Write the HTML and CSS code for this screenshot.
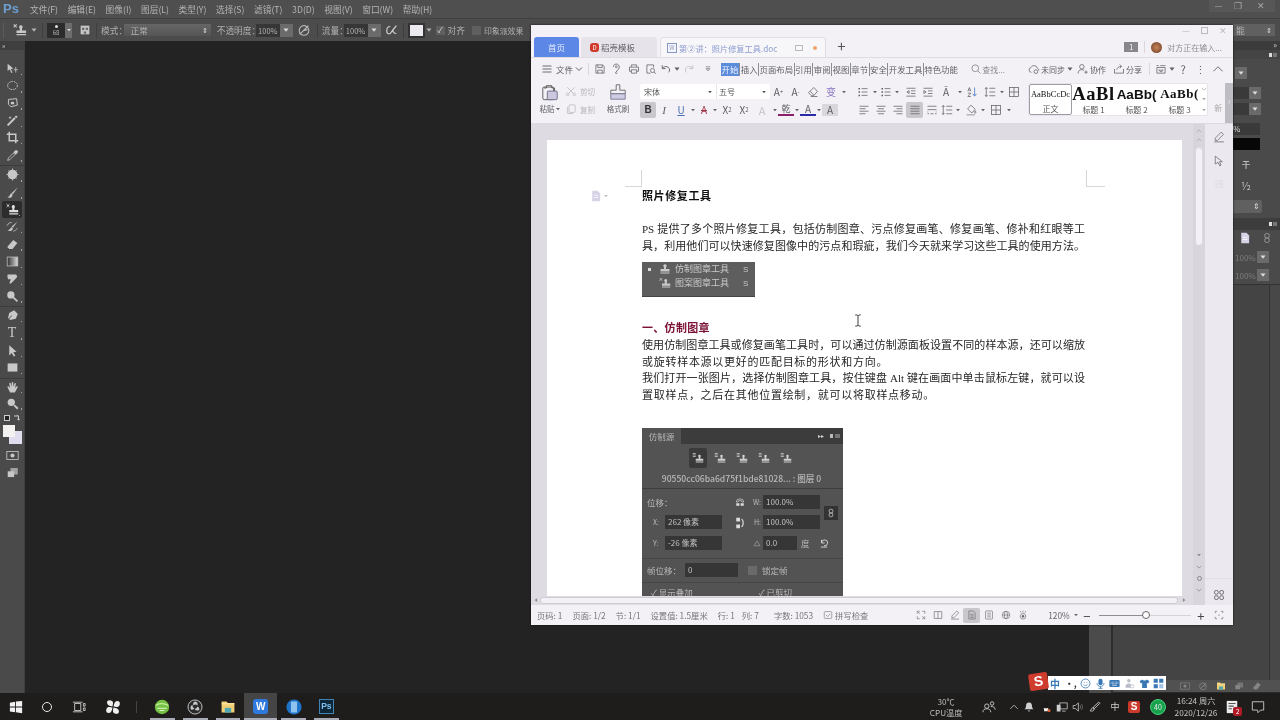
FILE: index.html
```html
<!DOCTYPE html>
<html lang="zh">
<head>
<meta charset="utf-8">
<title>Photoshop + WPS</title>
<link rel="stylesheet" href="styles.css">
</head>
<body>
<svg class="sprite" aria-hidden="true">
<symbol id="stamp" viewBox="0 0 16 16"><path fill="currentColor" d="M8 1.5a2.3 2.3 0 0 1 1.4 4.1V8H14v3.2H2V8h4.6V5.6A2.3 2.3 0 0 1 8 1.5zM2 12.5h12V14H2z"/></symbol>
<symbol id="stampx" viewBox="0 0 16 16"><path fill="currentColor" d="M9 2.500a2.100 2.100 0 0 1 1.300 3.700V8.500H15v3H4v-3h3.700V6.200A2.100 2.100 0 0 1 9 2.500zM4 12.700h11V14H4z"/><path d="M.8 1.500l3.400 3.400M4.200 1.500L.8 4.900" fill="none" stroke="currentColor" stroke-width="1.200"/></symbol>
<symbol id="stampd" viewBox="0 0 16 16"><path fill="currentColor" d="M10 3.500a1.800 1.800 0 0 1 1.100 3.200V9H15v2.500H5V9h3.900V6.700A1.800 1.800 0 0 1 10 3.500zM5 12.500h10V14H5z"/><path d="M1 2h4M1 4h4M1 6h4" fill="none" stroke="currentColor"/></symbol>
<symbol id="move" viewBox="0 0 16 16"><path fill="currentColor" d="M2 2l7 6-3 .5L8 13l-1.500.6L4.600 9 2 11z"/><path d="M12 6v7M9.500 9.500h5" stroke="currentColor" fill="none"/></symbol>
<symbol id="lasso" viewBox="0 0 16 16"><ellipse cx="8" cy="8" rx="6" ry="5" fill="none" stroke="currentColor" stroke-width="1.200" stroke-dasharray="2 1"/></symbol>
<symbol id="polyl" viewBox="0 0 16 16"><path d="M3 3l10-1 1 8-8 2-3-3z" fill="none" stroke="currentColor" stroke-width="1.200"/><path d="M6 6h4v3H6z" fill="currentColor"/></symbol>
<symbol id="wand" viewBox="0 0 16 16"><path d="M2 14L11 5" stroke="currentColor" stroke-width="2.400"/><circle cx="12.500" cy="3.500" r="1.500" fill="currentColor"/><path d="M5 3v3M3.500 4.500h3" stroke="currentColor"/></symbol>
<symbol id="crop" viewBox="0 0 16 16"><path d="M4 1v11h11M1 4h11v11" fill="none" stroke="currentColor" stroke-width="1.800"/></symbol>
<symbol id="drop" viewBox="0 0 16 16"><path d="M2 14l1-3 6-6 2 2-6 6z" fill="none" stroke="currentColor"/><path d="M9 4l2-2c1-1 2-1 3 0s1 2 0 3l-2 2z" fill="currentColor"/></symbol>
<symbol id="heal" viewBox="0 0 16 16"><circle cx="8" cy="8" r="6" fill="currentColor"/><path d="M3 3l2 2M13 3l-2 2M3 13l2-2M13 13l-2-2M8 .5v2M8 13.500v2M.5 8h2M13.500 8h2" stroke="currentColor"/></symbol>
<symbol id="brush" viewBox="0 0 16 16"><path d="M14.500 1.500L7 8.500l1.500 1.500z" fill="currentColor"/><path d="M7 9c-2 .5-2 2.500-3 3.500-.5.500-1.500 1-2.500 1 2 1.500 5 1 6-1 .4-.9.500-2 .5-2.500z" fill="currentColor"/></symbol>
<symbol id="hist" viewBox="0 0 16 16"><path d="M14 2L7 8l1.500 1.500zM7 9c-2 1-2 3-5 4 3 1 6 .5 6.500-3z" fill="currentColor"/><path d="M1 7c2-3 4-4 6-4M9 14c2-1 4-2 5-4" fill="none" stroke="currentColor"/></symbol>
<symbol id="eraser" viewBox="0 0 16 16"><path d="M9 2.500l5 3.500-6 7.500H4L1.500 11z" fill="currentColor"/></symbol>
<symbol id="grad" viewBox="0 0 16 16"><defs><linearGradient id="gr"><stop offset="0" stop-color="#2e2e2e"/><stop offset="1" stop-color="#dcdcdc"/></linearGradient></defs><rect x="1.500" y="2.500" width="13" height="11" fill="url(#gr)" stroke="#bbb"/></symbol>
<symbol id="smudge" viewBox="0 0 16 16"><path d="M2 3h9c3 0 3 3 2 4l-3 3-4 4c-1 .5-2 0-1.500-1.500L6 9H3c-1 0-1.500-5-1-6z" fill="currentColor"/></symbol>
<symbol id="dodge" viewBox="0 0 16 16"><circle cx="6" cy="6" r="4.500" fill="currentColor"/><path d="M9 9l5 5" stroke="currentColor" stroke-width="2.200"/></symbol>
<symbol id="pen" viewBox="0 0 16 16"><path d="M10 1.500l4.500 4.500-2.500 6-7 1.500L2.500 11 4 5z" fill="currentColor"/><path d="M3 13l4-5" stroke="#4a4a4a"/></symbol>
<symbol id="path" viewBox="0 0 16 16"><path d="M4 1.500l9 8-4 .5 2.500 4.500-2 1L7 11l-3 3z" fill="currentColor"/></symbol>
<symbol id="rect" viewBox="0 0 16 16"><rect x="2" y="3" width="12" height="10" fill="currentColor"/></symbol>
<symbol id="hand" viewBox="0 0 16 16"><path d="M5 14L2 8c-.5-1.500 1-2 1.800-.8L5 8.500 4 3c0-1.200 1.600-1.200 1.900 0L7 7V2c0-1.200 1.800-1.200 1.900 0L9.300 7 10.500 3c.4-1 1.900-.8 1.700.5L11 8.500l1.800-1.700c1-.8 2.200.2 1.400 1.300L11 14z" fill="currentColor"/></symbol>
<symbol id="zoomi" viewBox="0 0 16 16"><circle cx="6.500" cy="6.500" r="4.500" fill="currentColor"/><path d="M10 10l4.500 4.500" stroke="currentColor" stroke-width="2.400"/></symbol>
<symbol id="mask" viewBox="0 0 16 16"><rect x="1" y="3" width="14" height="10" fill="none" stroke="currentColor"/><circle cx="8" cy="8" r="2.500" fill="currentColor"/></symbol>
<symbol id="screen" viewBox="0 0 16 16"><rect x="1.500" y="6" width="9" height="8" fill="currentColor" stroke="#4a4a4a"/><rect x="5.500" y="2.500" width="9" height="8" fill="currentColor" opacity=".7"/></symbol>
<symbol id="pie" viewBox="0 0 16 16"><circle cx="8" cy="8.500" r="5.500" fill="none" stroke="currentColor" stroke-width="1.200"/><path d="M3 13L13 3M8 8.500l4-1" stroke="currentColor" stroke-width="1.400"/></symbol>
<symbol id="flow" viewBox="0 0 16 16"><path d="M6 4C3 4 2 7 2 9.500S4 13 6 12l3-4 4-5M9 8c0 2 1 4 4 4" fill="none" stroke="currentColor" stroke-width="1.400"/></symbol>
<symbol id="dd" viewBox="0 0 8 8"><path d="M1.500 2.500h5L4 5.800z" fill="currentColor"/></symbol>
<symbol id="rt" viewBox="0 0 8 8"><path d="M2.500 1.500v5L5.800 4z" fill="currentColor"/></symbol>
<symbol id="lt" viewBox="0 0 8 8"><path d="M5.500 1.500v5L2.200 4z" fill="currentColor"/></symbol>
<symbol id="chev" viewBox="0 0 8 8"><path d="M1 2.500L4 5.500 7 2.500" fill="none" stroke="currentColor"/></symbol>
<symbol id="up" viewBox="0 0 16 16"><path d="M2 11l6-6 6 6" fill="none" stroke="currentColor" stroke-width="1.200"/></symbol>
<symbol id="swap" viewBox="0 0 8 8"><path d="M1 2h4.500v4M4 .8L5.500 2.300M4.300 4.800L5.500 6.200 6.800 4.800" fill="none" stroke="currentColor"/></symbol>
<symbol id="ham" viewBox="0 0 16 16"><path d="M2 4h12M2 8h12M2 12h12" stroke="currentColor" stroke-width="1.200"/></symbol>
<symbol id="save" viewBox="0 0 16 16"><path d="M2.500 2.500h9l2 2v9h-11zM5 2.500V6h6V2.500M5 13.500V9.500h6v4" fill="none" stroke="currentColor"/></symbol>
<symbol id="wsave" viewBox="0 0 16 16"><path d="M3 5a4 4 0 1 1 7 3L6 13M8 13a1 1 0 1 1-2 0" fill="none" stroke="currentColor" stroke-width="1.100"/><circle cx="7" cy="5" r="1.200" fill="none" stroke="currentColor"/></symbol>
<symbol id="print" viewBox="0 0 16 16"><path d="M4.500 5V2.500h7V5M4.500 11H2V5.500h12V11h-2.500M4.500 9h7v4.500h-7z" fill="none" stroke="currentColor"/></symbol>
<symbol id="prev" viewBox="0 0 16 16"><path d="M11.500 6V2.500h-9v11h5" fill="none" stroke="currentColor"/><circle cx="10" cy="10" r="2.700" fill="none" stroke="currentColor"/><path d="M12 12l2.500 2.500" stroke="currentColor"/></symbol>
<symbol id="undo" viewBox="0 0 16 16"><path d="M3 3v4.500h4.500M3.200 7.200C5 4.500 9 3.800 11.300 6c2 2 1.800 4.800.2 6.500" fill="none" stroke="currentColor" stroke-width="1.200"/></symbol>
<symbol id="redo" viewBox="0 0 16 16"><path d="M13 3v4.500H8.500M12.800 7.200C11 4.500 7 3.800 4.700 6c-2 2-1.800 4.800-.2 6.500" fill="none" stroke="currentColor" stroke-width="1.200"/></symbol>
<symbol id="more" viewBox="0 0 16 16"><path d="M4.500 4.500h7M5 7.500h6L8 11z" fill="none" stroke="currentColor"/></symbol>
<symbol id="search" viewBox="0 0 16 16"><circle cx="7" cy="7" r="4.500" fill="none" stroke="currentColor" stroke-width="1.200"/><path d="M10.300 10.300l3.700 3.700" stroke="currentColor" stroke-width="1.200"/></symbol>
<symbol id="cloud" viewBox="0 0 16 16"><path d="M4.500 12.500a3.300 3.300 0 0 1-.5-6.500 4.500 4.500 0 0 1 8.500 1 2.800 2.800 0 0 1 2 3" fill="none" stroke="currentColor"/><circle cx="10.500" cy="11.500" r="2.500" fill="none" stroke="currentColor"/></symbol>
<symbol id="collab" viewBox="0 0 16 16"><circle cx="6.500" cy="5" r="3" fill="none" stroke="currentColor"/><path d="M1.500 14c0-3.500 2-5 5-5 1.500 0 2.500.4 3 1M12 10v4.500M9.800 12.200h4.500" fill="none" stroke="currentColor"/></symbol>
<symbol id="share" viewBox="0 0 16 16"><path d="M2 8v5.500h12V8M5 9c.5-3 3-4.500 6-4.500M9 2l2.500 2.500L9 7" fill="none" stroke="currentColor"/></symbol>
<symbol id="box" viewBox="0 0 16 16"><path d="M2 3.500h3M7 3.500h7M2.500 6h11v7.500h-11zM5 9.500h6L8 12z" fill="none" stroke="currentColor"/></symbol>
<symbol id="paste" viewBox="0 0 20 20"><path d="M3 5.500h3V3h6v2.500h3v4" fill="none" stroke="#555"/><rect x="2" y="4.500" width="12" height="14" rx="1.500" fill="none" stroke="#555"/><rect x="7" y="9" width="11" height="9.500" rx="1" fill="#cbc8e0" stroke="#6a6a80"/></symbol>
<symbol id="cut" viewBox="0 0 16 16"><path d="M3 3l8 8M13 3L5 11" stroke="currentColor"/><circle cx="3.500" cy="12.500" r="1.800" fill="none" stroke="currentColor"/><circle cx="12.500" cy="12.500" r="1.800" fill="none" stroke="currentColor"/></symbol>
<symbol id="copy" viewBox="0 0 16 16"><rect x="5.500" y="2.500" width="8" height="10" rx="1" fill="none" stroke="currentColor"/><path d="M3.500 5v9h7" fill="none" stroke="currentColor"/></symbol>
<symbol id="fbrush" viewBox="0 0 20 20"><path d="M8 2h4v6h6v4H2V8h6z" fill="none" stroke="#666"/><path d="M2 12h16v6H2z" fill="#cfcce6" stroke="#77768c"/></symbol>
<symbol id="clear" viewBox="0 0 16 16"><path d="M9 2l5 5-5 6H6L2 9z" fill="none" stroke="currentColor"/><path d="M4 7l5 5M5 14h9" stroke="currentColor"/></symbol>
<symbol id="list" viewBox="0 0 16 16"><path d="M6 3.500h8M6 8h8M6 12.500h8" stroke="currentColor"/><path d="M2 2.500h2v2H2zM2 7h2v2H2zM2 11.500h2v2H2z" fill="currentColor"/></symbol>
<symbol id="indl" viewBox="0 0 16 16"><path d="M2 3h12M8 6.500h6M8 10h6M2 13.500h12M5.500 6L2.500 8l3 2z" fill="none" stroke="currentColor"/></symbol>
<symbol id="indr" viewBox="0 0 16 16"><path d="M2 3h12M8 6.500h6M8 10h6M2 13.500h12M2.500 6l3 2-3 2z" fill="none" stroke="currentColor"/></symbol>
<symbol id="sort" viewBox="0 0 16 16"><path d="M11.500 2v11M9 10.500l2.500 3 2.500-3" fill="none" stroke="#3a6fc2"/><path d="M2.500 7l2-5 2 5M3.500 5.500h2M2.500 9.500h4l-4 4.500h4" fill="none" stroke="currentColor"/></symbol>
<symbol id="spacing" viewBox="0 0 16 16"><path d="M7 3h8M7 8h8M7 13h8M3 2v12M1.200 4L3 2l1.800 2M1.200 12L3 14l1.800-2" fill="none" stroke="currentColor"/></symbol>
<symbol id="table" viewBox="0 0 16 16"><rect x="2" y="2" width="12" height="12" fill="none" stroke="currentColor"/><path d="M2 8h12M8 2v12" stroke="currentColor"/></symbol>
<symbol id="aleft" viewBox="0 0 16 16"><path d="M2 3h12M2 6.300h8M2 9.600h12M2 13h8" stroke="currentColor"/></symbol>
<symbol id="acen" viewBox="0 0 16 16"><path d="M2 3h12M4 6.300h8M2 9.600h12M4 13h8" stroke="currentColor"/></symbol>
<symbol id="aright" viewBox="0 0 16 16"><path d="M2 3h12M6 6.300h8M2 9.600h12M6 13h8" stroke="currentColor"/></symbol>
<symbol id="ajust" viewBox="0 0 16 16"><path d="M2 3h12M2 6.300h12M2 9.600h12M2 13h12" stroke="currentColor"/></symbol>
<symbol id="adist" viewBox="0 0 16 16"><path d="M2 3h12M2 7.500h12M2 13h2M6 13h4M12 13h2" stroke="currentColor"/><path d="M2 10.500h1M13 10.500h1" stroke="currentColor"/></symbol>
<symbol id="shade" viewBox="0 0 16 16"><path d="M8 1.500l5.500 5.500-4.500 5-5.500-5.500zM13.500 9c1 1.500 1.500 2.500 0 3.500-1-1-1-2 0-3.500z" fill="none" stroke="currentColor"/><path d="M2 14.500h11" stroke="#777"/></symbol>
<symbol id="side-pen" viewBox="0 0 16 16"><path d="M11 1.500l3 3-8 8H3v-3zM1.500 14.500h13" fill="none" stroke="currentColor"/></symbol>
<symbol id="cursor" viewBox="0 0 16 16"><path d="M3 1.500l9.500 7.500H8.500l2.200 4.500-1.800 1-2.200-4.700L3 12z" fill="none" stroke="currentColor"/></symbol>
<symbol id="faded" viewBox="0 0 16 16"><path d="M2 4h12M2 8h12M2 12h12M9 3l4 10" stroke="currentColor"/></symbol>
<symbol id="grid4" viewBox="0 0 16 16"><rect x="2" y="2" width="5" height="5" rx="2" fill="none" stroke="currentColor" stroke-width="1.200"/><rect x="9" y="2" width="5" height="5" rx="2" fill="none" stroke="currentColor" stroke-width="1.200"/><rect x="2" y="9" width="5" height="5" rx="2" fill="none" stroke="currentColor" stroke-width="1.200"/><rect x="9" y="9" width="5" height="5" rx="2" fill="none" stroke="currentColor" stroke-width="1.200"/></symbol>
<symbol id="sample" viewBox="0 0 16 16"><rect x="1.500" y="1.500" width="13" height="13" fill="#c4c4c4" stroke="#3c3c3c"/><path d="M4 5h3v3H4zM9 5h3v3H9zM6.500 10h3v3h-3z" fill="#6a6a6a"/></symbol>
<symbol id="docic" viewBox="0 0 16 16"><path d="M3 1h7l3.500 3.500V15H3z" fill="#d6d3e6"/><path d="M5 7h6M5 10h6" stroke="#fff"/></symbol>
<symbol id="check" viewBox="0 0 16 16"><rect x="2" y="2.500" width="12" height="11" rx="1.500" fill="none" stroke="currentColor"/><path d="M5 8l2.500 2.500L11.500 6" fill="none" stroke="currentColor"/></symbol>
<symbol id="expand" viewBox="0 0 16 16"><path d="M2 6V2h4M10 2h4v4M14 10v4h-4M6 14H2v-4M3 3l3 3M13 13l-3-3" fill="none" stroke="currentColor"/></symbol>
<symbol id="book" viewBox="0 0 16 16"><path d="M2 2.500h12v11H2zM8 2.500v11" fill="none" stroke="currentColor"/></symbol>
<symbol id="pagev" viewBox="0 0 16 16"><path d="M3 1.500h7l3 3v10H3zM5.500 7h5M5.500 9.500h5M5.500 12h5" fill="none" stroke="currentColor"/></symbol>
<symbol id="outl" viewBox="0 0 16 16"><rect x="2.500" y="1.500" width="11" height="13" rx="1" fill="none" stroke="currentColor"/><path d="M5 5h6M5 8h6M5 11h6" stroke="currentColor"/></symbol>
<symbol id="globe" viewBox="0 0 16 16"><circle cx="8" cy="8" r="6" fill="none" stroke="currentColor"/><ellipse cx="8" cy="8" rx="2.500" ry="6" fill="none" stroke="currentColor"/><path d="M2 8h12" stroke="currentColor"/></symbol>
<symbol id="eye" viewBox="0 0 16 16"><circle cx="8" cy="10" r="4.500" fill="none" stroke="currentColor"/><circle cx="8" cy="10" r="2" fill="currentColor"/><path d="M5 4L3.500 1.500M8 4V1M11 4l1.500-2.500" stroke="currentColor"/></symbol>
<symbol id="focus" viewBox="0 0 16 16"><path d="M2 5V2h3M11 2h3v3M14 11v3h-3M5 14H2v-3" fill="none" stroke="currentColor"/><circle cx="8" cy="8" r="1" fill="currentColor"/></symbol>
<symbol id="anchor" viewBox="0 0 16 16"><path d="M2 8a6 5 0 0 1 12 0h-3a3 2.500 0 0 0-6 0z" fill="none" stroke="currentColor"/><path d="M2 10h5v4H2zM9 10h5v4H9z" fill="currentColor"/></symbol>
<symbol id="flip" viewBox="0 0 16 16"><path d="M3 1h5v5H3zM3 10h5v5H3z" fill="currentColor"/><path d="M10 3c3 1 3 9 0 10" fill="none" stroke="currentColor" stroke-width="1.500"/></symbol>
<symbol id="angle" viewBox="0 0 16 16"><path d="M2 13.500h12L8 4z" fill="none" stroke="currentColor"/></symbol>
<symbol id="reset" viewBox="0 0 16 16"><path d="M4 3v5h5M4.200 7.500A4.800 4.800 0 1 1 8 12.500M3 14.500h10" fill="none" stroke="currentColor" stroke-width="1.400"/></symbol>
<symbol id="link" viewBox="0 0 16 16"><rect x="5" y="2" width="6" height="6" rx="2.500" fill="none" stroke="currentColor" stroke-width="1.300"/><rect x="5" y="8" width="6" height="6" rx="2.500" fill="none" stroke="currentColor" stroke-width="1.300"/></symbol>
<symbol id="win" viewBox="0 0 16 16"><path fill="currentColor" d="M1 3l6-1v5.500H1zM8 1.800L15 1v6.500H8zM1 8.500h6V14l-6-1zM8 8.500h7V15l-7-1z"/></symbol>
<symbol id="tview" viewBox="0 0 16 16"><path d="M3 4h7v8H3zM1 2.500h11M1 13.500h11M13 4h2v3h-2zM13 9h2v3h-2z" fill="none" stroke="currentColor"/></symbol>
<symbol id="pinw" viewBox="0 0 16 16"><path fill="currentColor" d="M7.500 7.500C4 7 2 6 2 3.500S5 .5 7 2s.5 4 .5 5.500zM8.500 7.500C9 4 10 2 12.500 2s3 3 1.500 5-4 .5-5.500.5zM8.500 8.500C12 9 14 10 14 12.500S11 15.500 9 14s-.5-4-.5-5.500zM7.500 8.500C7 12 6 14 3.500 14S.5 11 2 9s4-.5 5.500-.5z"/></symbol>
<symbol id="ball" viewBox="0 0 20 20"><circle cx="10" cy="10" r="9" fill="#74c043"/><path d="M2 8c4-3 11-3 16 0" stroke="#c7ec9d" stroke-width="1.500" fill="none"/><path d="M4 11.500h12M7 14.500h6" stroke="#e4f6cf" stroke-width="1.300"/></symbol>
<symbol id="obs" viewBox="0 0 20 20"><circle cx="10" cy="10" r="8.800" fill="#2a2a2a" stroke="#c6c6c6" stroke-width="1.200"/><path d="M10 3a3.500 3.500 0 0 1 3 5 4 4 0 0 0-5 0A3.500 3.500 0 0 1 10 3zM5 13a3.500 3.500 0 0 1 2-5.500 4 4 0 0 0 2.200 4.500A3.500 3.500 0 0 1 5 13zM15.500 13a3.500 3.500 0 0 1-6-.5 4 4 0 0 0 3.500-3 3.500 3.500 0 0 1 2.500 3.500z" fill="#c6c6c6"/></symbol>
<symbol id="folder" viewBox="0 0 20 20"><path d="M2 3h6l2 2h8v12H2z" fill="#f2cf73"/><path d="M2 6h16" stroke="#fff2c8"/><rect x="6" y="11" width="8" height="6" fill="#4ea8b5"/></symbol>
<symbol id="phone" viewBox="0 0 20 20"><circle cx="10" cy="10" r="9.500" fill="#1f74c9"/><rect x="6.200" y="3" width="7.600" height="14" rx="1.200" fill="#8fc4ee"/></symbol>
<symbol id="people" viewBox="0 0 16 16"><circle cx="5.500" cy="7" r="2.500" fill="none" stroke="currentColor"/><path d="M1 14c0-3 2-4 4.500-4S10 11 10 14" fill="none" stroke="currentColor"/><circle cx="11.500" cy="4" r="2" fill="none" stroke="currentColor"/><path d="M10 7.500c3 -.5 5 1 5 3.500" fill="none" stroke="currentColor"/></symbol>
<symbol id="bell" viewBox="0 0 16 16"><path d="M8 2c3 0 4 2 4 5 0 2 1 3 2 4H2c1-1 2-2 2-4 0-3 1-5 4-5zM6.500 12.500h3a1.500 1.500 0 0 1-3 0z" fill="currentColor"/></symbol>
<symbol id="qq" viewBox="0 0 16 16"><path d="M8 1c3 0 4 2.500 4 5 0 1 2 3 1.500 5-1 0-1.500-.5-1.500-.5S12 14 8 14s-4-3.500-4-3.500-.5.5-1.500.5C2 9 4 7 4 6c0-2.500 1-5 4-5z" fill="#1a1a1a"/><path d="M5 9c2 1 4 1 6 0l-.5 4.500H5.500z" fill="#f3efe7"/><circle cx="12" cy="12.500" r="2" fill="#e2623a"/></symbol>
<symbol id="net" viewBox="0 0 16 16"><path d="M5 2.500h10v8H5z" fill="none" stroke="currentColor"/><path d="M1 5h5v9H1z" fill="currentColor"/><path d="M8 13.500h5" stroke="currentColor"/></symbol>
<symbol id="vol" viewBox="0 0 16 16"><path d="M1.500 6h3l4-3.500v11l-4-3.500h-3z" fill="none" stroke="currentColor"/><path d="M10.500 5.500c1.300 1.500 1.300 3.500 0 5M12.500 4c2 2.500 2 5.500 0 8" fill="none" stroke="#777"/></symbol>
<symbol id="penc" viewBox="0 0 16 16"><path d="M13 1.500l1.500 1.500-7 7-2-1.500zM5 9c-2 .5-1.500 2.500-3.500 4 2 1 5 .5 5.500-2.500z" fill="none" stroke="currentColor" stroke-width="1.200"/></symbol>
<symbol id="notes" viewBox="0 0 16 16"><path d="M2 1h12v14H2z" fill="#ececec"/><path d="M4 4h8M4 7h6M4 10h4" stroke="#555" stroke-width="1.300"/></symbol>
<symbol id="action" viewBox="0 0 16 16"><path d="M1.500 2h13v9.500H11l-3 3-.5-3h-6z" fill="none" stroke="currentColor"/></symbol>
<symbol id="smile" viewBox="0 0 16 16"><circle cx="8" cy="8" r="6.500" fill="none" stroke="currentColor" stroke-width="1.200"/><path d="M5 9.500c1.500 2 4.500 2 6 0" fill="none" stroke="currentColor"/><path d="M5.500 5.500h1v1.500h-1zM9.500 5.500h1v1.500h-1z" fill="currentColor"/></symbol>
<symbol id="mic" viewBox="0 0 16 16"><rect x="5" y="1" width="6" height="9.500" rx="3" fill="currentColor"/><path d="M3 7.500c0 6.500 10 6.500 10 0M8 12.500v2.500M5 15h6" fill="none" stroke="currentColor" stroke-width="1.200"/></symbol>
<symbol id="keyb" viewBox="0 0 16 16"><rect x=".5" y="3" width="15" height="10" rx="1.500" fill="currentColor"/><path d="M2.500 6h11M2.500 8h11" stroke="#fff" stroke-dasharray="1 1"/><path d="M4.500 10.500h7" stroke="#fff"/></symbol>
<symbol id="pers" viewBox="0 0 16 16"><circle cx="7" cy="4" r="2.500" fill="#b9bcc6"/><path d="M2 14c0-4 2-6 5-6s5 2 5 6z" fill="#b9bcc6"/><circle cx="12" cy="12" r="2.500" fill="#fff" stroke="#b9bcc6"/></symbol>
<symbol id="shirt" viewBox="0 0 16 16"><path d="M5 2L1 4.500 2.500 8 4.500 7v7.500h7V7l2 1L15 4.500 11 2c-1 2-5 2-6 0z" fill="currentColor"/></symbol>
<symbol id="tiles" viewBox="0 0 16 16"><path d="M1 1h6v6H1zM9 1h6v6H9zM1 9h6v6H1z" fill="currentColor"/><path d="M9 9h6v6H9z" fill="#9fc3e8"/></symbol>
</svg>

<div class="screen">
  <div class="ps">
    <header class="ps-menu">
      <b class="ps-logo">Ps</b>
      <nav class="ps-items">
        <span>文件(F)</span><span>编辑(E)</span><span>图像(I)</span><span>图层(L)</span><span>类型(Y)</span><span>选择(S)</span><span>滤镜(T)</span><span>3D(D)</span><span>视图(V)</span><span>窗口(W)</span><span>帮助(H)</span>
      </nav>
      <div class="ps-win">
        <span class="win-b">—</span><span class="win-b">❐</span><span class="win-b wide">✕</span>
      </div>
    </header>
    <div class="ps-opts">
      <i class="grip"></i>
      <svg class="i14 o-stamp"><use href="#stampx"/></svg>
      <svg class="i8"><use href="#dd"/></svg>
      <i class="opt-div"></i>
      <div class="brush-prev"><i></i><span>68</span></div>
      <span class="brush-dd"><svg class="i8"><use href="#dd"/></svg></span>
      <svg class="i12 o-m1"><use href="#sample"/></svg>
      <i class="opt-div"></i>
      <span class="o-lab">模式：</span>
      <div class="o-select"><span>正常</span><em>⇕</em></div>
      <span class="o-lab o-m2">不透明度：</span>
      <div class="o-num">100%</div><span class="o-btn"><svg class="i8"><use href="#dd"/></svg></span>
      <svg class="i14 o-m3"><use href="#pie"/></svg>
      <i class="opt-div"></i>
      <span class="o-lab">流量：</span>
      <div class="o-num">100%</div><span class="o-btn"><svg class="i8"><use href="#dd"/></svg></span>
      <svg class="i14 o-m4"><use href="#flow"/></svg>
      <i class="opt-div"></i>
      <div class="o-swatch"></div>
      <svg class="i8"><use href="#dd"/></svg>
      <span class="o-check on">✓</span><span class="o-lab">对齐</span>
      <span class="o-check o-m5"></span><span class="o-lab o-imp">印象派效果</span>
      <div class="o-combo"><span>能</span><em>⇕</em></div>
    </div>
    <div class="ps-work">
      <aside class="tools">
        <div class="tools-top">»</div>
        <div class="tgroup">
          <div class="tool"><svg><use href="#move"/></svg></div>
          <div class="tool"><svg><use href="#lasso"/></svg></div>
          <div class="tool"><svg><use href="#polyl"/></svg></div>
          <div class="tool"><svg><use href="#wand"/></svg></div>
          <div class="tool"><svg><use href="#crop"/></svg></div>
          <div class="tool"><svg><use href="#drop"/></svg></div>
        </div>
        <div class="tgroup">
          <div class="tool"><svg><use href="#heal"/></svg></div>
          <div class="tool"><svg><use href="#brush"/></svg></div>
          <div class="tool sel"><svg><use href="#stampx"/></svg></div>
          <div class="tool"><svg><use href="#hist"/></svg></div>
          <div class="tool"><svg><use href="#eraser"/></svg></div>
          <div class="tool"><svg><use href="#grad"/></svg></div>
          <div class="tool"><svg><use href="#smudge"/></svg></div>
          <div class="tool"><svg><use href="#dodge"/></svg></div>
        </div>
        <div class="tgroup">
          <div class="tool"><svg><use href="#pen"/></svg></div>
          <div class="tool tool-t">T</div>
          <div class="tool"><svg><use href="#path"/></svg></div>
          <div class="tool"><svg><use href="#rect"/></svg></div>
        </div>
        <div class="tgroup last">
          <div class="tool"><svg><use href="#hand"/></svg></div>
          <div class="tool"><svg><use href="#zoomi"/></svg></div>
        </div>
        <div class="swatches">
          <div class="sw-mini"><i class="mini-d"></i><svg class="i8"><use href="#swap"/></svg></div>
          <i class="sw-bg"></i><i class="sw-fg"></i>
        </div>
        <div class="tool plain"><svg><use href="#mask"/></svg></div>
        <div class="tool plain"><svg><use href="#screen"/></svg></div>
      </aside>
      <main class="ps-canvas"></main>
      <div class="ps-strip"></div>
      <aside class="dock">
        <div class="d-tabs">»</div>
        <div class="d-head"><i class="d-menu"></i></div>
        <div class="d-rows">
          <div class="d-row r1"><span class="d-btn"><svg class="i8"><use href="#dd"/></svg></span></div>
          <div class="d-row r2"><i class="d-in"></i><span class="d-btn"><svg class="i8"><use href="#dd"/></svg></span></div>
          <div class="d-row r3"><i class="d-in"></i><span class="d-btn"><svg class="i8"><use href="#dd"/></svg></span></div>
          <div class="d-row r4"><i class="d-in wide"><span>%</span></i></div>
          <div class="d-row r5"><i class="d-in black"></i></div>
          <div class="d-txt r6">T̶</div>
          <div class="d-txt r7">½</div>
          <div class="d-row r8"><i class="d-sel">⇕</i></div>
          <div class="d-head2"><i class="d-menu"></i></div>
          <div class="d-row r9"><svg class="i12 d-doc"><use href="#docic"/></svg><svg class="i12 d-chain"><use href="#link"/></svg></div>
          <div class="d-row r10"><span class="d-pct">100%</span><span class="d-btn"><svg class="i8"><use href="#dd"/></svg></span></div>
          <div class="d-row r11"><span class="d-pct">100%</span><span class="d-btn"><svg class="i8"><use href="#dd"/></svg></span></div>
        </div>
        <div class="d-lower"></div>
        <div class="d-foot">
          <svg class="i10"><use href="#mask"/></svg><svg class="i10"><use href="#pie"/></svg><svg class="i10"><use href="#folder"/></svg><svg class="i10"><use href="#screen"/></svg><svg class="i10"><use href="#eraser"/></svg>
        </div>
      </aside>
    </div>
  </div>

  <footer class="taskbar">
    <div class="tb-s s1"><svg class="i14"><use href="#win"/></svg></div>
    <div class="tb-s s2"><i class="cortana"></i></div>
    <div class="tb-s s3"><svg class="i14"><use href="#tview"/></svg></div>
    <div class="tb-s s4"><svg class="i16"><use href="#pinw"/></svg></div>
    <i class="tb-div"></i>
    <div class="tb-app"><svg class="i16"><use href="#ball"/></svg></div>
    <div class="tb-app"><svg class="i16"><use href="#obs"/></svg></div>
    <div class="tb-app"><svg class="i16"><use href="#folder"/></svg></div>
    <div class="tb-app act"><span class="wps-ic">W</span></div>
    <div class="tb-app"><svg class="i16"><use href="#phone"/></svg></div>
    <div class="tb-app"><span class="ps-ic">Ps</span></div>
    <div class="tray">
      <div class="cpu"><span>30℃</span><span>CPU温度</span></div>
      <svg class="i14 t-people"><use href="#people"/></svg>
      <svg class="i10 t-caret"><use href="#up"/></svg>
      <svg class="i12 t-i"><use href="#bell"/></svg>
      <svg class="i12 t-i"><use href="#qq"/></svg>
      <svg class="i12 t-i"><use href="#net"/></svg>
      <svg class="i12 t-i"><use href="#vol"/></svg>
      <svg class="i12 t-i"><use href="#penc"/></svg>
      <span class="t-zh">中</span>
      <span class="t-s">S</span>
      <span class="t-green">40</span>
      <div class="clock"><span>16:24 周六</span><span>2020/12/26</span></div>
      <div class="t-notes"><svg class="i14"><use href="#notes"/></svg><b>2</b></div>
      <svg class="i14 t-act"><use href="#action"/></svg>
    </div>
  </footer>

  <section class="wps">
    <div class="w-title">
      <div class="tab home">首页</div>
      <div class="tab tmpl"><i class="t-dot">D</i>稻壳模板</div>
      <div class="tab doc"><i class="t-w">W</i><span class="t-name">第②讲：照片修复工具.doc</span><i class="t-mon"></i><i class="t-or"></i></div>
      <div class="tab-add">+</div>
      <div class="w-title-r">
        <div class="w-ctrls"><span>—</span><span class="sq"></span><span>✕</span></div>
        <div class="w-collab"><b>1</b><i class="vr"></i><i class="avatar"></i><span>对方正在输入...</span></div>
      </div>
    </div>

    <div class="w-menu">
      <svg class="i12 m-ham"><use href="#ham"/></svg>
      <span class="m-file">文件</span>
      <svg class="i8"><use href="#chev"/></svg>
      <i class="vr m-vr"></i>
      <span class="sl w17"><svg class="i12"><use href="#save"/></svg></span>
      <span class="sl w17"><svg class="i12"><use href="#wsave"/></svg></span>
      <span class="sl w17"><svg class="i12"><use href="#print"/></svg></span>
      <span class="sl w17"><svg class="i12"><use href="#prev"/></svg></span>
      <span class="sl w14"><svg class="i12"><use href="#undo"/></svg></span>
      <span class="sl w8"><svg class="i8"><use href="#dd"/></svg></span>
      <span class="sl w16 dim"><svg class="i12"><use href="#redo"/></svg></span>
      <span class="sl w22"><svg class="i10"><use href="#more"/></svg></span>
      <nav class="m-tabs"><span class="on">开始</span><span>插入</span><span>页面布局</span><span>引用</span><span>审阅</span><span>视图</span><span>章节</span><span>安全</span><span>开发工具</span><span>特色功能</span></nav>
      <span class="m-find"><svg class="i12"><use href="#search"/></svg>查找...</span>
      <div class="m-right">
        <span class="mr m-sync"><svg class="i12"><use href="#cloud"/></svg>未同步<svg class="i8"><use href="#dd"/></svg></span>
        <span class="mr"><svg class="i12"><use href="#collab"/></svg>协作</span>
        <span class="mr"><svg class="i12"><use href="#share"/></svg>分享</span>
        <i class="vr"></i>
        <span class="mr m-box"><svg class="i12"><use href="#box"/></svg><svg class="i8"><use href="#dd"/></svg></span>
        <span class="mr q">?</span>
        <span class="mr q">⋮</span>
        <svg class="i12"><use href="#up"/></svg>
      </div>
    </div>

    <div class="w-ribbon">
      <div class="rg clip">
        <div class="clip-big"><svg class="i18"><use href="#paste"/></svg><span>粘贴<svg class="i6"><use href="#dd"/></svg></span></div>
        <div class="clip-small"><span><svg class="i12"><use href="#cut"/></svg>剪切</span><span><svg class="i12"><use href="#copy"/></svg>复制</span></div>
        <div class="clip-big fb"><svg class="i18"><use href="#fbrush"/></svg><span>格式刷</span></div>
      </div>
      <div class="rg font">
        <div class="rr">
          <div class="fsel"><div class="f-name">宋体<svg class="i6"><use href="#dd"/></svg></div><div class="f-size">五号<svg class="i6"><use href="#dd"/></svg></div></div>
          <span class="sl w17 tx">A<sup>+</sup></span><span class="sl w17 tx">A<sup>-</sup></span>
          <span class="sl w18"><svg class="i12"><use href="#clear"/></svg></span>
          <span class="sl w18 tx purple">变</span><span class="sl w8"><svg class="i6"><use href="#dd"/></svg></span>
        </div>
        <div class="rr">
          <span class="sl w16 bt on">B</span><span class="sl w16 it">I</span><span class="sl w18 ul">U</span><span class="sl w6"><svg class="i6"><use href="#dd"/></svg></span>
          <span class="sl w16 st">A</span><span class="sl w6"><svg class="i6"><use href="#dd"/></svg></span>
          <span class="sl w18 tx">X<sup>2</sup></span><span class="sl w16 tx">X<sub>2</sub></span>
          <span class="sl w20 ghost">A</span><span class="sl w6"><svg class="i6"><use href="#dd"/></svg></span>
          <span class="sl w16 hl">乾</span><span class="sl w6"><svg class="i6"><use href="#dd"/></svg></span>
          <span class="sl w16 fc">A</span><span class="sl w6"><svg class="i6"><use href="#dd"/></svg></span>
          <span class="sl w16 bx">A</span>
        </div>
      </div>
      <div class="rg para">
        <div class="rr">
          <span class="sl w16"><svg class="i12"><use href="#list"/></svg></span><span class="sl w8"><svg class="i6"><use href="#dd"/></svg></span>
          <span class="sl w14"><svg class="i12"><use href="#list"/></svg></span><span class="sl w8"><svg class="i6"><use href="#dd"/></svg></span>
          <span class="sl w20"><svg class="i12"><use href="#indl"/></svg></span><span class="sl w14"><svg class="i12"><use href="#indr"/></svg></span>
          <span class="sl w22 tx">Ā</span><span class="sl w6"><svg class="i6"><use href="#dd"/></svg></span>
          <span class="sl w18"><svg class="i12"><use href="#sort"/></svg></span>
          <span class="sl w18"><svg class="i12"><use href="#spacing"/></svg></span><span class="sl w6"><svg class="i6"><use href="#dd"/></svg></span>
          <span class="sl w18"><svg class="i12"><use href="#table"/></svg></span>
        </div>
        <div class="rr">
          <span class="sl w17"><svg class="i12"><use href="#aleft"/></svg></span><span class="sl w17"><svg class="i12"><use href="#acen"/></svg></span><span class="sl w17"><svg class="i12"><use href="#aright"/></svg></span>
          <span class="sl w17 hi"><svg class="i12"><use href="#ajust"/></svg></span><span class="sl w17"><svg class="i12"><use href="#adist"/></svg></span>
          <span class="sl w14"><svg class="i12"><use href="#spacing"/></svg></span><span class="sl w8"><svg class="i6"><use href="#dd"/></svg></span>
          <span class="sl w18"><svg class="i12"><use href="#shade"/></svg></span><span class="sl w6"><svg class="i6"><use href="#dd"/></svg></span>
          <span class="sl w20"><svg class="i12"><use href="#table"/></svg></span><span class="sl w6"><svg class="i6"><use href="#dd"/></svg></span>
        </div>
      </div>
      <div class="gallery">
        <div class="g-item sel"><span class="g1">AaBbCcDc</span><em>正文</em></div>
        <div class="g-item"><span class="g2">AaBl</span><em>标题 1</em></div>
        <div class="g-item"><span class="g3">AaBb(</span><em>标题 2</em></div>
        <div class="g-item"><span class="g4">AaBb(</span><em>标题 3</em></div>
        <div class="g-arrows"><svg class="i6"><use href="#chev"/></svg><svg class="i6"><use href="#dd"/></svg><svg class="i6"><use href="#dd"/></svg></div>
      </div>
      <span class="r-new">新</span>
      <span class="r-strip">›</span>
    </div>

    <div class="w-body">
      <div class="w-docside">
        <div class="pagewrap">
          <article class="page">
            <i class="crop-l"></i><i class="crop-r"></i>
            <svg class="i12 doc-ic"><use href="#docic"/></svg>
            <svg class="i6 doc-dd"><use href="#dd"/></svg>
            <svg class="ibeam" viewBox="0 0 8 14"><path d="M1 1h2l1 1 1-1h2M4 2v10M1 13h2l1-1 1 1h2" fill="none" stroke="#333"/></svg>
            <h1 class="doc-title">照片修复工具</h1>
            <p class="ln full">PS 提供了多个照片修复工具，包括仿制图章、污点修复画笔、修复画笔、修补和红眼等工</p>
            <p class="ln full">具，利用他们可以快速修复图像中的污点和瑕疵，我们今天就来学习这些工具的使用方法。</p>
            <div class="stamps">
              <div class="st-row"><i class="st-bullet"></i><svg class="i12"><use href="#stamp"/></svg><span>仿制图章工具</span><b>S</b></div>
              <div class="st-row"><i class="st-bullet none"></i><svg class="i12"><use href="#stampx"/></svg><span>图案图章工具</span><b>S</b></div>
            </div>
            <h2 class="doc-h2">一、仿制图章</h2>
            <p class="ln full">使用仿制图章工具或修复画笔工具时，可以通过仿制源面板设置不同的样本源，还可以缩放</p>
            <p class="ln">或旋转样本源以更好的匹配目标的形状和方向。</p>
            <p class="ln full">我们打开一张图片，选择仿制图章工具，按住键盘 Alt 键在画面中单击鼠标左键，就可以设</p>
            <p class="ln">置取样点，之后在其他位置绘制，就可以将取样点移动。</p>
            <div class="cs">
              <div class="cs-head"><span class="cs-tab">仿制源</span><span class="cs-more">▸▸</span><i class="cs-menu"></i></div>
              <div class="cs-icons"><span class="on"><svg class="i12"><use href="#stampd"/></svg></span><span><svg class="i12"><use href="#stampd"/></svg></span><span><svg class="i12"><use href="#stampd"/></svg></span><span><svg class="i12"><use href="#stampd"/></svg></span><span><svg class="i12"><use href="#stampd"/></svg></span></div>
              <div class="cs-name">90550cc06ba6d75f1bde81028... : 图层 0</div>
              <div class="cs-grid">
                <div class="cs-col-l">
                  <div class="cs-r"><span class="cs-lbl">位移：</span></div>
                  <div class="cs-r"><span class="cs-xy">X:</span><span class="cs-in w57">262 像素</span></div>
                  <div class="cs-r"><span class="cs-xy">Y:</span><span class="cs-in w57">-26 像素</span></div>
                </div>
                <div class="cs-col-m"><svg class="i10"><use href="#anchor"/></svg><svg class="i12"><use href="#flip"/></svg></div>
                <div class="cs-col-r">
                  <div class="cs-r"><span class="cs-k">W:</span><span class="cs-in w57">100.0%</span></div>
                  <div class="cs-r"><span class="cs-k">H:</span><span class="cs-in w57">100.0%</span></div>
                  <div class="cs-r"><span class="cs-k"><svg class="i8"><use href="#angle"/></svg></span><span class="cs-in w34">0.0</span><span class="cs-deg">度</span><svg class="i10 cs-reset"><use href="#reset"/></svg></div>
                  <span class="cs-link"><svg class="i10"><use href="#link"/></svg></span>
                </div>
              </div>
              <div class="cs-frame"><span>帧位移：</span><span class="cs-in w53">0</span><i class="cs-cb"></i><span>锁定帧</span></div>
              <div class="cs-checks"><span>✓ 显示叠加</span><span>✓ 已剪切</span></div>
            </div>
          </article>
        </div>
        <div class="hscroll"><svg class="i6"><use href="#lt"/></svg><i class="hs-thumb"></i><svg class="i6"><use href="#rt"/></svg></div>
      </div>
      <div class="vscroll">
        <svg class="i6"><use href="#up"/></svg>
        <svg class="i6"><use href="#up"/></svg>
        <i class="vs-thumb"></i>
        <div class="vs-nav"><svg class="i6"><use href="#dd"/></svg><svg class="i6"><use href="#chev"/></svg><i></i><svg class="i6"><use href="#chev"/></svg></div>
      </div>
      <div class="w-side">
        <svg class="i12"><use href="#side-pen"/></svg>
        <svg class="i12"><use href="#cursor"/></svg>
        <svg class="i12 faint"><use href="#faded"/></svg>
        <div class="side-end"><svg class="i12"><use href="#grid4"/></svg></div>
      </div>
    </div>

    <div class="w-status">
      <span>页码: 1</span><span>页面: 1/2</span><span>节: 1/1</span><span>设置值: 1.5厘米</span><span>行: 1</span><span class="cl">列: 7</span><span class="wc">字数: 1053</span>
      <span class="spell"><svg class="i10"><use href="#check"/></svg>拼写检查</span>
      <div class="st-right">
        <span class="sl w17"><svg class="i10"><use href="#expand"/></svg></span>
        <span class="sl w17"><svg class="i10"><use href="#book"/></svg></span>
        <span class="sl w17"><svg class="i10"><use href="#side-pen"/></svg></span>
        <span class="sl w17 hi"><svg class="i10"><use href="#pagev"/></svg></span>
        <span class="sl w17"><svg class="i10"><use href="#outl"/></svg></span>
        <span class="sl w17"><svg class="i10"><use href="#globe"/></svg></span>
        <span class="sl w17"><svg class="i10"><use href="#eye"/></svg></span>
        <span class="zoomv">120%<svg class="i6"><use href="#dd"/></svg></span>
        <span class="zplus">−</span>
        <div class="slider"><i></i></div>
        <span class="zplus">+</span>
        <svg class="i10 fs"><use href="#focus"/></svg>
      </div>
    </div>
  </section>

  <div class="ime">
    <span class="ime-s">S</span>
    <div class="ime-bar">
      <span class="ime-zh">中</span><span class="ime-p">•,</span>
      <svg class="i12"><use href="#smile"/></svg><svg class="i12"><use href="#mic"/></svg><svg class="i12"><use href="#keyb"/></svg><svg class="i12"><use href="#pers"/></svg><svg class="i12"><use href="#shirt"/></svg><svg class="i12"><use href="#tiles"/></svg>
    </div>
  </div>
</div>
</body>
</html>
```

FILE: styles.css
```css
* { box-sizing: border-box; }
html, body { margin: 0; padding: 0; background: #222; }
body { width: 1280px; height: 720px; overflow: hidden; font-family: "Noto Sans CJK SC", "Noto Sans", sans-serif; }
i, em { font-style: normal; }
.sprite { position: absolute; width: 0; height: 0; overflow: hidden; }
svg { flex: none; display: block; }
.i6 { width: 6px; height: 6px; } .i8 { width: 8px; height: 8px; } .i10 { width: 10px; height: 10px; }
.i12 { width: 12px; height: 12px; } .i14 { width: 14px; height: 14px; } .i16 { width: 16px; height: 16px; } .i18 { width: 18px; height: 18px; }

.screen { position: relative; width: 1280px; height: 720px; display: flex; flex-direction: column; overflow: hidden; filter: blur(.4px); }

/* Photoshop */
.ps { flex: 1; min-height: 0; display: flex; flex-direction: column; background: #4d4d4d; color: #b4b4b4; }
.ps-menu { height: 18px; display: flex; align-items: center; background: #4f4f4f; font-size: 8.7px; }
.ps-logo { width: 30px; padding-left: 3px; color: #6d9fd1; font: bold 13px/18px "Liberation Sans", sans-serif; }
.ps-items { display: flex; gap: 9.6px; white-space: nowrap; }
.ps-win { margin-left: auto; display: flex; height: 12px; align-self: flex-start; background: #575757; color: #a6a6a6; font-size: 9px; line-height: 12px; margin-right: 5px; }
.win-b { width: 19px; text-align: center; }
.win-b.wide { width: 28px; }

.ps-opts { height: 23px; display: flex; align-items: center; background: #4c4c4c; border-top: 1px solid #3f3f3f; font-size: 8.7px; white-space: nowrap; }
.grip { width: 1px; height: 15px; margin: 0 9px 0 3px; background: #5c5c5c; }
.o-stamp { margin-right: 3px; color: #c8c8c8; }
.opt-div { width: 1px; height: 15px; margin: 0 4px; background: #3e3e3e; }
.brush-prev { width: 18px; height: 15px; background: #2c2c2c; display: flex; flex-direction: column; align-items: center; font-size: 6px; line-height: 7px; padding-top: 2px; }
.brush-prev i { width: 3px; height: 3px; border-radius: 50%; background: #ddd; margin-bottom: 1px; }
.brush-dd { width: 7px; height: 15px; background: #6d6d6d; display: flex; align-items: center; justify-content: center; color: #ddd; }
.brush-dd svg { width: 6px; }
.o-m1 { margin-left: 7px; margin-right: 1px; }
.o-lab { color: #b0b0b0; font-feature-settings: "halt"; }
.o-imp { font-size: 7.9px; }
.o-select { width: 87px; height: 12px; margin-left: 1px; padding: 0 3px 0 7px; background: linear-gradient(#666, #555); border-radius: 1px; display: flex; justify-content: space-between; align-items: center; font-size: 8.5px; }
.o-select em, .o-combo em { font-size: 7px; color: #ddd; }
.o-m2 { margin-left: 6px; }
.o-num { width: 24px; height: 13px; margin-left: 0; background: #363636; font-size: 7.5px; line-height: 13px; text-align: center; }
.o-btn { width: 13px; height: 13px; background: #6b6b6b; color: #ddd; display: flex; align-items: center; justify-content: center; }
.o-m3 { margin-left: 4px; margin-right: 2px; color: #bbb; }
.o-m4 { margin-left: 4px; margin-right: 0; color: #ccc; }
.o-swatch { width: 17px; height: 15px; background: #eceaf0; border: 2px solid #333; }
.o-check { width: 9px; height: 9px; margin: 0 3px 0 3px; background: #5f5f5f; border-radius: 1px; font-size: 8px; line-height: 8px; color: #ddd; text-align: center; }
.o-m5 { margin-left: 7px; }
.o-combo { margin-left: auto; margin-right: 5px; width: 42px; height: 12px; padding: 0 3px; background: #606060; border-radius: 1px; display: flex; justify-content: space-between; align-items: center; }

.ps-work { flex: 1; min-height: 0; display: flex; }
.tools { width: 25px; flex: none; background: #4a4a4a; color: #c8c8c8; display: flex; flex-direction: column; border-right: 1px solid #3e3e3e; }
.tools-top { height: 19px; flex: none; font-size: 7px; line-height: 9px; padding-left: 2px; background: linear-gradient(#3f3f3f 9px, #4a4a4a 9px); }
.tgroup { border-bottom: 1px solid #3c3c3c; padding-bottom: 1.5px; }
.tgroup.last { border: 0; padding: 0; }
.tool { position: relative; height: 17.3px; flex: none; display: flex; align-items: center; justify-content: center; }
.tool svg { width: 13px; height: 13px; }
.tgroup.last .tool { height: 16.5px; }
.tool::after { content: ""; position: absolute; right: 2px; bottom: 2px; width: 1.5px; height: 1.5px; background: #a5a5a5; }
.tool.plain::after { display: none; }
.tool.sel { background: #2c2c2c; border-radius: 2px; margin: 0 2px; color: #ddd; }
.tool-t { font: 14px "Liberation Serif", serif; }
.swatches { position: relative; height: 35px; flex: none; }
.sw-mini { display: flex; justify-content: space-between; align-items: center; padding: 2px 3px 0 4px; }
.mini-d { width: 6px; height: 6px; background: #222; border: 1px solid #ccc; }
.sw-fg { position: absolute; left: 3px; top: 13px; width: 12px; height: 12px; background: #f4f2f0; }
.sw-bg { position: absolute; left: 9px; top: 19px; width: 13px; height: 13px; background: #e0deee; }
.ps-canvas { flex: 1; background: #232323; }
.ps-strip { width: 24px; flex: none; background: #4b4b4b; border-right: 2px solid #2d2d2d; }
.dock { width: 167px; flex: none; display: flex; flex-direction: column; background: #4a4a4a; color: #9a9a9a; font-size: 8px; }
.d-tabs { height: 9px; background: #3b3b3b; font-size: 8px; line-height: 8px; padding-right: 3px; text-align: right; color: #ccc; }
.d-head { height: 9px; background: #444; display: flex; justify-content: flex-end; align-items: center; padding-right: 3px; }
.d-menu { width: 8px; height: 4px; background: linear-gradient(90deg, #ddd 3px, transparent 3px, transparent 4px, #777 4px); }
.d-rows { padding-left: 120px; height: 226px; flex: none; display: flex; flex-direction: column; border-bottom: 1px solid #333; }
.d-row { display: flex; height: 12px; flex: none; align-items: center; }
.d-btn { width: 12px; height: 12px; background: #6a6a6a; color: #ddd; display: flex; align-items: center; justify-content: center; }
.d-in { width: 16px; height: 12px; background: #3a3a3a; }
.d-in.wide { width: 27px; padding-top: 1px; color: #ddd; font-size: 8px; line-height: 10px; }
.d-in.black { width: 27px; background: #070707; }
.r1 { margin: 8px 0 0 2px; }
.r2 { margin-top: 8px; } .r3 { margin-top: 4px; }
.r4 { margin-top: 8px; } .r5 { margin-top: 3px; }
.d-txt { text-align: center; width: 26px; color: #bbb; font-size: 11px; line-height: 14px; }
.r6 { margin-top: 7px; } .r7 { margin-top: 7px; }
.r8 { margin-top: 8px; height: 13px; }
.d-sel { width: 29px; height: 13px; background: #606060; border-radius: 0 2px 2px 0; text-align: right; padding-right: 2px; line-height: 12px; color: #ddd; }
.d-head2 { width: 47px; height: 12px; margin-top: 5px; flex: none; background: #3d3d3d; display: flex; justify-content: flex-end; align-items: center; padding-right: 3px; }
.r9 { margin-top: 0; height: 16px; gap: 10px; padding-left: 6px; }
.r10 { margin-top: 5px; } .r11 { margin-top: 6px; }
.d-pct { width: 24px; padding-left: 2px; color: #7d7d7d; font-size: 8px; }
.d-lower { flex: 1; background: #444; border-right: 10px solid #484848; position: relative; }
.d-lower::after { content: ""; position: absolute; right: 0; top: 0; bottom: 0; width: 1px; background: #333; }
.d-foot { height: 13px; background: #515151; border-bottom: 1px solid #2a2a2a; display: flex; align-items: center; color: #858585; padding-left: 67px; gap: 8px; }

/* Taskbar */
.taskbar { height: 27px; flex: none; display: flex; align-items: center; background: #1e1d1c; color: #d0d0d0; font-size: 9px; }
.tb-s { display: flex; align-items: center; justify-content: center; height: 100%; }
.s1 { width: 32px; color: #f2f2f2; } .s2 { width: 30px; } .s3 { width: 34px; } .s4 { width: 34px; color: #eee; }
.cortana { width: 10px; height: 10px; border-radius: 50%; border: 1.6px solid #e6e6e6; }
.tb-div { width: 1px; height: 12px; margin-left: 6px; margin-right: 9px; background: #444; }
.tb-app { position: relative; width: 32.8px; height: 100%; display: flex; align-items: center; justify-content: center; }
.tb-app::after { content: ""; position: absolute; left: 4px; right: 4px; bottom: 0; height: 2px; background: #a9acb6; }
.tb-app.act { background: #454545; }
.tb-app.act::after { left: 0; right: 0; }
.wps-ic { width: 15px; height: 15px; border-radius: 3px; background: #2e79de; color: #fff; font: bold 10px/15px "Liberation Sans", sans-serif; text-align: center; }
.ps-ic { width: 15px; height: 15px; background: #0d2738; border: 1px solid #3f84b5; color: #7fc1ef; font: bold 8.5px/13px "Liberation Sans", sans-serif; text-align: center; }
.tray { margin-left: auto; display: flex; align-items: center; padding-right: 15px; white-space: nowrap; }
.cpu { width: 50px; display: flex; flex-direction: column; align-items: center; font-size: 8.2px; line-height: 11px; color: #bbb; }
.t-people { margin-left: 11px; margin-right: 13px; }
.t-caret { margin-right: 2px; }
.t-i { margin: 0 2.2px; }
.t-zh { width: 18px; text-align: center; margin-left: 3px; }
.t-s { width: 12px; height: 12px; margin: 0 3px 0 4px; border-radius: 2px; background: #cc3a2b; color: #fff; font: bold 10px/12px "Liberation Sans", sans-serif; text-align: center; }
.t-green { width: 16px; height: 16px; margin-left: 7px; border-radius: 50%; background: #18a24e; border: 1px solid #46d27a; color: #e8e8e8; font-size: 7px; line-height: 14px; text-align: center; }
.clock { width: 50px; margin-left: 5px; display: flex; flex-direction: column; align-items: center; font-size: 8.2px; line-height: 11.5px; color: #c4c4c4; }
.t-notes { position: relative; width: 20px; margin-left: 1px; display: flex; justify-content: center; }
.t-notes b { position: absolute; right: 0; bottom: -2px; width: 9px; height: 9px; background: #b01a26; border-radius: 2px; font-size: 6.5px; font-weight: 400; line-height: 9px; text-align: center; color: #fff; }
.t-act { margin-left: 9px; }

/* WPS */
.wps { position: absolute; left: 531px; top: 25px; width: 702px; height: 600px; display: flex; flex-direction: column; background: #f3f1f5; color: #5f5f63; box-shadow: 0 0 2px #111; font-size: 8.5px; white-space: nowrap; }
.w-title { height: 33px; flex: none; display: flex; align-items: flex-end; padding-left: 3px; border-bottom: 1px solid #dfdde3; }
.tab { height: 20px; display: flex; align-items: center; border-radius: 3px 3px 0 0; }
.tab.home { width: 45px; justify-content: center; background: #5d87e6; color: #e6ecfa; }
.tab.tmpl { width: 76px; margin-left: 2px; padding-left: 9px; background: #e6e4ea; gap: 2px; }
.t-dot { width: 9px; height: 9px; border-radius: 3px; background: #cf3a2c; color: #fff; font-size: 6px; line-height: 9px; text-align: center; }
.tab.doc { width: 166px; margin-left: 3px; padding-left: 6px; background: #f7f6f8; border: 1px solid #e1dfe5; border-bottom: 0; color: #8c9bd0; font-size: 8.2px; }
.t-w { width: 10px; height: 10px; border: 1px solid #8596c8; font-size: 6px; line-height: 8px; text-align: center; margin-right: 2px; }
.t-name { flex: 1; }
.t-mon { width: 8px; height: 6px; border: 1px solid #bbb; margin-right: 10px; }
.t-or { width: 4px; height: 4px; border-radius: 50%; background: #f0a672; margin-right: 8px; }
.tab-add { width: 31px; height: 20px; text-align: center; font-size: 15px; line-height: 18px; color: #555; }
.w-title-r { margin-left: auto; align-self: stretch; display: flex; flex-direction: column; align-items: flex-end; }
.w-ctrls { height: 13px; display: flex; gap: 10px; padding-right: 5px; color: #bcbac0; font-size: 9px; line-height: 12px; }
.w-ctrls .sq { width: 7px; height: 7px; min-width: 7px; margin: 2px 0 0; border: 1px solid #bcbac0; }
.w-ctrls span { min-width: 10px; text-align: center; }
.w-collab { display: flex; align-items: center; margin-top: 2px; height: 14px; padding-right: 11px; font-size: 8px; color: #8d8c92; }
.w-collab b { width: 14px; height: 10px; background: #87868b; color: #eee; font-weight: 400; line-height: 10px; text-align: center; }
.vr { width: 1px; height: 12px; background: #d9d7dd; margin: 0 6px; flex: none; }
.avatar { width: 11px; height: 11px; border-radius: 50%; margin: 0 5px 0 0; background: radial-gradient(#c88657, #6b3a2b); }

.w-menu { height: 22px; flex: none; display: flex; align-items: center; }
.m-ham { margin-left: 10px; }
.m-file { margin: 0 2px 0 3px; }
.m-vr { margin: 0 2px 0 5px; }
.sl { display: flex; align-items: center; justify-content: center; flex: none; }
.w6 { width: 6px; } .w8 { width: 8px; } .w14 { width: 14px; } .w16 { width: 16px; } .w17 { width: 17px; } .w18 { width: 18px; } .w20 { width: 20px; } .w22 { width: 22px; }
.dim { color: #c0bec6; }
.m-tabs { display: flex; font-size: 8.4px; line-height: 13px; margin-left: 1.5px; }
.m-tabs span { padding: 0 .5px; border-left: 1px solid #8c8c92; }
.m-tabs .on { background: #5b8bdb; color: #f2f5ff; border: 0; padding: 0 1px; }
.m-find { display: flex; align-items: center; margin-left: 12px; font-size: 8px; color: #8c8b91; }
.m-right { margin-left: auto; padding-right: 9px; display: flex; align-items: center; gap: 7px; font-size: 8px; }
.mr { display: flex; align-items: center; gap: 1px; }
.m-sync { margin-right: -4px; }
.m-right .vr { margin: 0 -2px 0 0; }
.m-box { margin-right: -5px; }
.mr.q { width: 10px; justify-content: center; font-size: 11px; }

.w-ribbon { height: 44px; flex: none; display: flex; padding-top: 3px; border-bottom: 1px solid #dddbe1; }
.rg { flex: none; }
.clip { width: 109px; display: flex; padding-left: 7px; }
.clip-big { width: 24px; display: flex; flex-direction: column; align-items: center; gap: 3px; font-size: 7.5px; line-height: 10px; }
.clip-big span { display: flex; align-items: center; }
.clip-small { width: 42px; display: flex; flex-direction: column; gap: 6px; color: #b8b6bc; font-size: 7.5px; padding-top: 2px; padding-left: 3px; }
.clip-small span { display: flex; align-items: center; gap: 3px; height: 12px; }
.fb { width: 28px; }
.font { width: 215px; display: flex; flex-direction: column; gap: 1px; }
.rr { height: 17px; display: flex; align-items: center; }
.fsel { width: 130px; height: 15px; display: flex; background: #fff; border-radius: 2px; font-size: 8px; color: #555; }
.f-name { width: 77px; padding: 0 3px 0 4px; display: flex; align-items: center; justify-content: space-between; border-right: 1px solid #e8e6ea; }
.f-size { flex: 1; padding: 0 3px 0 2px; display: flex; align-items: center; justify-content: space-between; }
.tx { font-size: 10px; } .tx sup, .tx sub { font-size: 6px; line-height: 0; }
.purple { color: #8b78c4; }
.sl.on, .sl.hi { background: #c9c7cc; border-radius: 2px; height: 16px; }
.bt { font: bold 10px "Liberation Sans", sans-serif; color: #333; }
.it { font: italic 11px "Liberation Serif", serif; }
.ul { font-size: 10px; text-decoration: underline; color: #4a6fb5; }
.st { font-size: 10px; text-decoration: line-through; color: #a0384a; }
.ghost { font-size: 11px; color: #c7c5cc; }
.hl { font-size: 9px; border-bottom: 2px solid #8a1f6a; height: 12px; line-height: 9px; }
.fc { font-size: 10px; border-bottom: 2px solid #2a2ca8; height: 12px; line-height: 9px; }
.bx { font-size: 10px; background: #d9d7dc; height: 12px; }
.para { width: 173px; display: flex; flex-direction: column; gap: 1px; }
.gallery { width: 182px; height: 33px; display: flex; background: #fff; border: 1px solid #e6e4ea; border-radius: 2px; }
.g-item { width: 43px; display: flex; flex-direction: column; align-items: center; overflow: hidden; line-height: 1; }
.g-item.sel { width: 43px; border: 1px solid #9d9ca2; border-radius: 2px; }
.g-item span { height: 20px; display: flex; align-items: center; color: #111; }
.g-item em { font-size: 8px; color: #555; line-height: 11px; }
.g1 { font: 8.5px "Liberation Serif", serif; }
.g2 { font: bold 18.5px "Liberation Serif", serif; letter-spacing: .6px; }
.g3 { font: bold 13.5px "Liberation Sans", sans-serif; }
.g4 { font: bold 13px "Liberation Serif", serif; letter-spacing: .5px; }
.g-arrows { flex: 1; display: flex; flex-direction: column; align-items: center; justify-content: space-around; color: #aaa; }
.r-new { width: 14px; margin-left: 3px; align-self: flex-end; padding-bottom: 10px; color: #aaa; font-size: 8px; text-align: center; }
.r-strip { width: 8px; height: 40px; background: #bfbdc4; color: #e8e8e8; text-align: center; line-height: 38px; font-size: 9px; }

.w-body { flex: 1; min-height: 0; display: flex; background: #dedce2; }
.w-docside { width: 662px; flex: none; display: flex; flex-direction: column; }
.pagewrap { flex: 1; min-height: 0; padding: 16px 11px 0 16px; overflow: hidden; }
.page { position: relative; height: 460px; background: #fff; padding: 48px 97px 0 95px; overflow: hidden; font: 11px/16.6px "Liberation Serif", "Noto Sans CJK SC", serif; color: #262626; letter-spacing: .72px; }
.crop-l { position: absolute; left: 78px; top: 30px; width: 17px; height: 17px; border-right: 1px solid #d6d6d6; border-bottom: 1px solid #d6d6d6; }
.crop-r { position: absolute; left: 539px; top: 30px; width: 19px; height: 17px; border-left: 1px solid #d6d6d6; border-bottom: 1px solid #d6d6d6; }
.doc-ic { position: absolute; left: 43px; top: 50px; }
.doc-dd { position: absolute; left: 56px; top: 53px; color: #bbb; }
.ibeam { position: absolute; left: 307px; top: 174px; width: 8px; height: 13px; }
.doc-title { margin: 0 0 16px; font-size: 11px; font-weight: 700; line-height: 17px; letter-spacing: .6px; color: #111; }
.ln { margin: 0; width: 443px; white-space: nowrap; }
.ln.full { white-space: normal; text-align-last: justify; letter-spacing: 0; }
.stamps { width: 113px; height: 35px; margin-top: 8px; background: #5e5e5e; border-bottom: 1px solid #444; color: #c9c9c9; font-size: 8.5px; letter-spacing: 0; }
.st-row { height: 14px; display: flex; align-items: center; padding-left: 6px; }
.st-bullet { width: 3px; height: 3px; background: #ddd; margin-right: 8px; }
.st-bullet.none { background: none; }
.st-row span { margin-left: 4px; width: 68px; font-size: 9px; }
.st-row b { font: 8px "Liberation Sans", sans-serif; }
.doc-h2 { margin: 23px 0 0; font-size: 11px; font-weight: 700; line-height: 17px; color: #7b1238; letter-spacing: .3px; }
.cs { width: 201px; height: 169px; margin-top: 24px; background: #535353; color: #b9b9b9; overflow: hidden; font: 8.5px/12px "Noto Sans CJK SC", sans-serif; letter-spacing: 0; }
.cs-head { height: 16px; background: #3c3c3c; display: flex; align-items: stretch; }
.cs-tab { width: 39px; background: #535353; text-align: center; line-height: 16px; font-size: 8.5px; }
.cs-more { margin-left: auto; font-size: 6px; line-height: 16px; margin-right: 6px; color: #ccc; }
.cs-menu { width: 10px; height: 4px; margin: 6px 3px 0 0; background: linear-gradient(90deg, #bbb 3px, transparent 3px, transparent 5px, #777 5px); }
.cs-icons { height: 25px; padding: 3px 2px 0 0; display: flex; justify-content: center; align-items: center; }
.cs-icons span { width: 22px; height: 20px; display: flex; align-items: center; justify-content: center; color: #d0d0d0; }
.cs-icons .on { background: #3a3a3a; width: 18px; margin: 0 2px; border-radius: 2px; }
.cs-name { height: 20px; text-align: center; line-height: 19px; font-size: 8.6px; font-weight: 500; border-bottom: 1px solid #3e3e3e; padding-right: 2px; }
.cs-grid { position: relative; height: 70px; display: flex; border-bottom: 1px solid #464646; padding-top: 3px; }
.cs-col-l { width: 84px; }
.cs-col-m { width: 24px; display: flex; flex-direction: column; align-items: center; gap: 10px; padding: 5px 0 0 4px; color: #ddd; }
.cs-col-r { flex: 1; }
.cs-r { height: 20.5px; display: flex; align-items: center; }
.cs-lbl { padding-left: 5px; }
.cs-xy { width: 23px; padding-left: 11px; font-size: 7px; }
.cs-k { width: 13px; font-size: 7px; display: flex; justify-content: flex-end; padding-right: 2px; }
.cs-in { height: 14px; background: #363636; line-height: 14px; padding-left: 3px; font-size: 8px; color: #c2c2c2; display: block; }
.w57 { width: 57px; } .w34 { width: 34px; } .w53 { width: 53px; }
.cs-deg { margin-left: 4px; }
.cs-reset { margin-left: 9px; color: #ddd; }
.cs-link { position: absolute; left: 182px; top: 17px; width: 14px; height: 14px; background: #333; color: #ccc; display: flex; align-items: center; justify-content: center; }
.cs-frame { height: 24px; display: flex; align-items: center; padding-left: 5px; border-bottom: 1px solid #464646; }
.cs-frame .cs-in { margin: 0 10px 0 4px; }
.cs-cb { width: 9px; height: 9px; background: #6a6a6a; margin-right: 5px; }
.cs-checks { display: flex; padding: 3px 0 0 9px; gap: 66px; }

.hscroll { height: 8px; flex: none; display: flex; align-items: center; margin-bottom: 1px; padding-left: 2px; color: #888; }
.hs-thumb { width: 638px; height: 7px; margin: 0 3px 0 1px; border-radius: 3px; background: #f3f1f6; border: 1px solid #cfcdd3; }
.vscroll { width: 12px; flex: none; display: flex; flex-direction: column; align-items: center; background: #d8d6dc; padding-top: 4px; gap: 3px; color: #888; }
.vs-thumb { width: 8px; height: 99px; margin-top: 1px; background: #f3f1f6; border: 1px solid #dbd9df; border-radius: 4px; }
.vs-nav { margin-top: auto; margin-bottom: 12px; display: flex; flex-direction: column; gap: 6px; align-items: center; }
.vs-nav i { width: 5px; height: 5px; border: 1px solid #888; border-radius: 50%; }
.w-side { flex: 1; display: flex; flex-direction: column; align-items: center; gap: 11.5px; padding-top: 7px; background: #ebe9ef; color: #66656b; }
.faint { color: #dcdae0; }
.side-end { margin-top: auto; width: 100%; height: 27px; border-top: 1px solid #e1dfe5; display: flex; justify-content: center; padding-top: 10px; }

.w-status { height: 20px; flex: none; display: flex; align-items: center; padding-left: 6px; font-size: 8.3px; color: #77767c; }
.w-status > span { margin-right: 10px; }
.w-status > .cl { margin-left: -3px; margin-right: 15px; }
.spell { display: flex; align-items: center; gap: 2px; }
.st-right { margin-left: 34px; display: flex; align-items: center; color: #66656b; }
.st-right .sl { height: 15px; }
.zoomv { margin-left: 17px; margin-right: -2px; display: flex; align-items: center; gap: 3px; }
.zplus { width: 10px; margin-left: 5px; font-size: 13px; line-height: 1; text-align: center; color: #444; }
.slider { position: relative; width: 92px; height: 1px; margin-left: 7px; background: linear-gradient(90deg, #8e8d92 52%, #d6d4da 52%); }
.slider i { position: absolute; left: 43px; top: -3.5px; width: 8px; height: 8px; border-radius: 50%; background: #fff; border: 1px solid #666; }
.fs { margin-left: 8px; }

/* IME */
.ime { position: absolute; left: 1029px; top: 673px; display: flex; align-items: flex-end; }
.ime-s { width: 19px; height: 17px; background: #cf3b2d; color: #fff; border-radius: 2px; font: bold 14px/17px "Liberation Sans", sans-serif; text-align: center; transform: rotate(-8deg); }
.ime-bar { width: 118px; height: 14px; display: flex; align-items: center; gap: 3.6px; padding-left: 2px; background: #fff; color: #3a78b4; }
.ime-zh { font-size: 10px; font-weight: 700; width: 11px; line-height: 13px; }
.ime-p { font-size: 9px; font-weight: 700; width: 12px; text-align: center; color: #333; }
.ime-bar svg { width: 11px; height: 11px; }
```
